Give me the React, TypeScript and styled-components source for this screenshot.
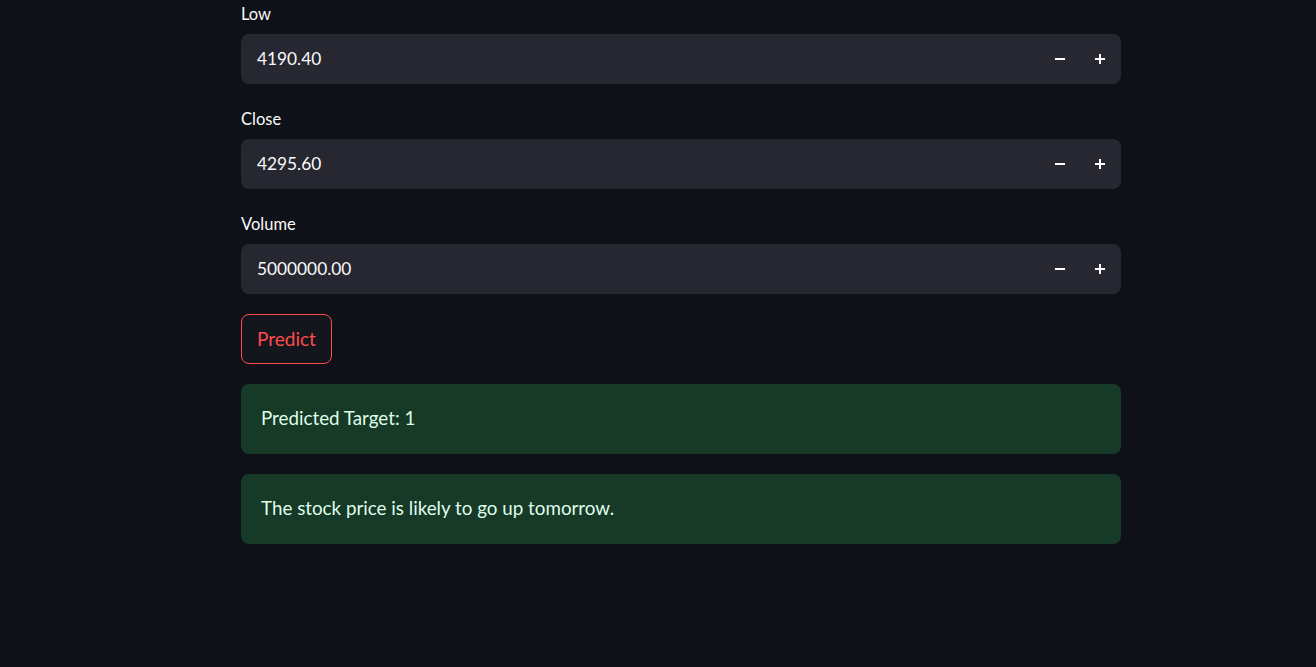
import React from "react";
import styled, { createGlobalStyle } from "styled-components";

const Global = createGlobalStyle`
  html, body { margin: 0; padding: 0; background: #0e1117; }
  body { font-family: Lato, "Noto Sans", sans-serif; color: #fafafa; }
  #root { min-height: 667px; }
`;

const Page = styled.main`
  width: 880px;
  margin: -1px 0 0 241px;
  display: flex;
  flex-direction: column;
  gap: 20px;
`;

const Field = styled.div`
  display: flex;
  flex-direction: column;
`;

const Label = styled.label`
  font-size: 16.5px;
  line-height: 30px;
  margin-bottom: 5px;
  color: #fafafa;
`;

const InputBox = styled.div`
  height: 50px;
  box-sizing: border-box;
  border-radius: 8px;
  background: #262730;
  display: flex;
  align-items: center;
  padding: 0 1px 0 16px;
`;

const Value = styled.span`
  flex: 1;
  font-size: 17.3px;
  color: #fafafa;
  padding-bottom: 2px;
`;

const StepButton = styled.button`
  width: 40px;
  height: 50px;
  border: none;
  background: transparent;
  color: #fafafa;
  display: flex;
  align-items: center;
  justify-content: center;
  padding: 0;
  cursor: pointer;
`;

const PredictButton = styled.button`
  align-self: flex-start;
  height: 50px;
  padding: 0 15px 2px;
  border: 1px solid #ff4b4b;
  border-radius: 8px;
  background: #13161d;
  color: #ff4b4b;
  font-family: inherit;
  font-size: 19px;
`;

const Alert = styled.div`
  height: 70px;
  box-sizing: border-box;
  border-radius: 8px;
  background: #173928;
  color: #dffde9;
  font-size: 18.8px;
  display: flex;
  align-items: center;
  padding: 0 20px 3px;
`;

const Minus = () => (
  <svg width="12" height="12" viewBox="0 0 12 12">
    <rect x="1" y="5" width="10" height="2" fill="#fafafa" />
  </svg>
);
const Plus = () => (
  <svg width="12" height="12" viewBox="0 0 12 12">
    <rect x="1" y="5" width="10" height="2" fill="#fafafa" />
    <rect x="5" y="1" width="2" height="10" fill="#fafafa" />
  </svg>
);

const fields = [
  { label: "Low", value: "4190.40" },
  { label: "Close", value: "4295.60" },
  { label: "Volume", value: "5000000.00" },
];

export default function App() {
  return (
    <>
      <Global />
      <Page>
        {fields.map((f) => (
          <Field key={f.label}>
            <Label>{f.label}</Label>
            <InputBox>
              <Value>{f.value}</Value>
              <StepButton aria-label="decrement"><Minus /></StepButton>
              <StepButton aria-label="increment"><Plus /></StepButton>
            </InputBox>
          </Field>
        ))}
        <PredictButton>Predict</PredictButton>
        <Alert>Predicted Target: 1</Alert>
        <Alert>The stock price is likely to go up tomorrow.</Alert>
      </Page>
    </>
  );
}
